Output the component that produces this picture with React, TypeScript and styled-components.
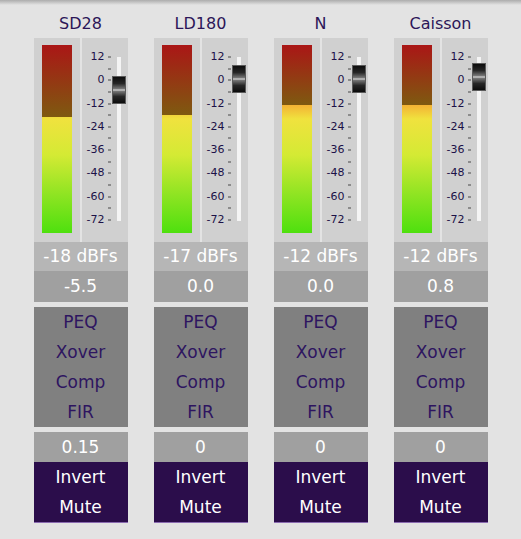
import styled, {createGlobalStyle} from "styled-components";

const GlobalStyle = createGlobalStyle`
  body {
    margin: 0;
    background: #e3e3e3;
    font-family: "DejaVu Sans", Verdana, sans-serif;
  }
`;

interface IChannel {
    name: string;
    level: number;
    gain: number;
    delay: string;
}

const channels: IChannel[] = [
    {name: "SD28", level: -18, gain: -5.5, delay: "0.15"},
    {name: "LD180", level: -17, gain: 0, delay: "0"},
    {name: "N", level: -12, gain: 0, delay: "0"},
    {name: "Caisson", level: -12, gain: 0.8, delay: "0"},
];

const scale = [12, 0, -12, -24, -36, -48, -60, -72];
const BAR_H = 188;
const DB_PX = 1.944;

const Page = styled.div`
  min-height: 539px;
  box-sizing: border-box;
  padding-top: 8px;
  background: linear-gradient(#acacac 0, #e3e3e3 5px);
  display: flex;
  justify-content: center;
  gap: 26px;
`;

const Strip = styled.div`
  width: 94px;
  display: flex;
  flex-direction: column;
`;

const Title = styled.div`
  height: 30px;
  line-height: 31px;
  text-align: center;
  font-size: 16px;
  color: #2c1658;
`;

const MeterBox = styled.div`
  height: 204px;
  display: flex;
  gap: 2px;
`;

const MeterPanel = styled.div`
  width: 46px;
  box-sizing: border-box;
  padding: 7px 0 0 8px;
  background: #d0d0d0;
`;

const Bar = styled.div`
  width: 30px;
  height: ${BAR_H}px;
  display: flex;
  flex-direction: column;
`;

const Unlit = styled.div`
  background: linear-gradient(#aa1616, #7e5a10);
`;

const Lit = styled.div`
  flex: 1;
  background: linear-gradient(#e83020 0, #f08a30 40px, #f3b234 60px, #f0e23e 74px, #d4ea34 110px, #8ee422 150px, #4ee00e ${BAR_H}px);
  background-size: 100% ${BAR_H}px;
  background-position: bottom;
`;

const ScalePanel = styled.div`
  width: 46px;
  background: #d0d0d0;
  display: flex;
`;

const Labels = styled.div`
  width: 23px;
  padding-top: 7px;
  display: flex;
  flex-direction: column;
`;

const Label = styled.div`
  height: 23.3px;
  line-height: 23.3px;
  text-align: right;
  font-size: 11px;
  color: #1c1248;
`;

const Ticks = styled.div`
  margin-left: 3px;
  padding-top: 18px;
  display: flex;
  flex-direction: column;
  gap: 9.65px;
`;

const Tick = styled.div`
  width: 3px;
  height: 2px;
  background: #8c8c8c;
`;

const Track = styled.div`
  position: relative;
  margin: 19px 0 0 6px;
  width: 4px;
  height: 164px;
  background: #f4f4f4;
`;

const Knob = styled.div`
  position: absolute;
  left: -5px;
  width: 14px;
  height: 28px;
  box-sizing: border-box;
  border: 1px solid #5a5a5a;
  background: linear-gradient(#0c0c0c 0%, #262626 25%, #7a7a7a 46%, #e0e0e0 50%, #7a7a7a 54%, #262626 75%, #0c0c0c 100%);
`;

const InfoRow = styled.div<{ $bg: string; $h?: number }>`
  height: ${p => p.$h ?? 30}px;
  line-height: ${p => p.$h ?? 30}px;
  text-align: center;
  font-size: 17px;
  color: #fff;
  background: ${p => p.$bg};
  white-space: nowrap;
`;

const Menu = styled.div`
  margin: 5px 0;
  background: #808080;
`;

const MenuItem = styled.div`
  height: 30px;
  line-height: 31px;
  text-align: center;
  font-size: 17px;
  color: #2e1560;
`;

const Actions = styled.div`
  background: #2b0d4b;
  border-bottom: 1px solid #8a6ab0;
`;

const ActionItem = styled.div`
  height: 30px;
  line-height: 31px;
  text-align: center;
  font-size: 17px;
  color: #fff;
`;

const ChannelStrip = ({ch}: { ch: IChannel }) => {
    const unlit = 36 + -ch.level * 2;
    const knobTop = 22 - ch.gain * DB_PX - 14;
    return (
        <Strip>
            <Title>{ch.name}</Title>
            <MeterBox>
                <MeterPanel>
                    <Bar>
                        <Unlit style={{height: unlit}}/>
                        <Lit/>
                    </Bar>
                </MeterPanel>
                <ScalePanel>
                    <Labels>
                        {scale.map(s => <Label key={s}>{s}</Label>)}
                    </Labels>
                    <Ticks>
                        {Array.from({length: 15}).map((_, i) => <Tick key={i}/>)}
                    </Ticks>
                    <Track>
                        <Knob style={{top: knobTop}}/>
                    </Track>
                </ScalePanel>
            </MeterBox>
            <InfoRow $bg="#b6b6b6" $h={29}>{ch.level} dBFs</InfoRow>
            <InfoRow $bg="#a0a0a0" $h={31}>{ch.gain.toFixed(1)}</InfoRow>
            <Menu>
                {["PEQ", "Xover", "Comp", "FIR"].map(m => <MenuItem key={m}>{m}</MenuItem>)}
            </Menu>
            <InfoRow $bg="#a0a0a0">{ch.delay}</InfoRow>
            <Actions>
                <ActionItem>Invert</ActionItem>
                <ActionItem>Mute</ActionItem>
            </Actions>
        </Strip>
    );
}

const App = () => {
    return (
        <>
            <GlobalStyle/>
            <Page>
                {channels.map(ch => <ChannelStrip key={ch.name} ch={ch}/>)}
            </Page>
        </>
    );
}

export default App;
